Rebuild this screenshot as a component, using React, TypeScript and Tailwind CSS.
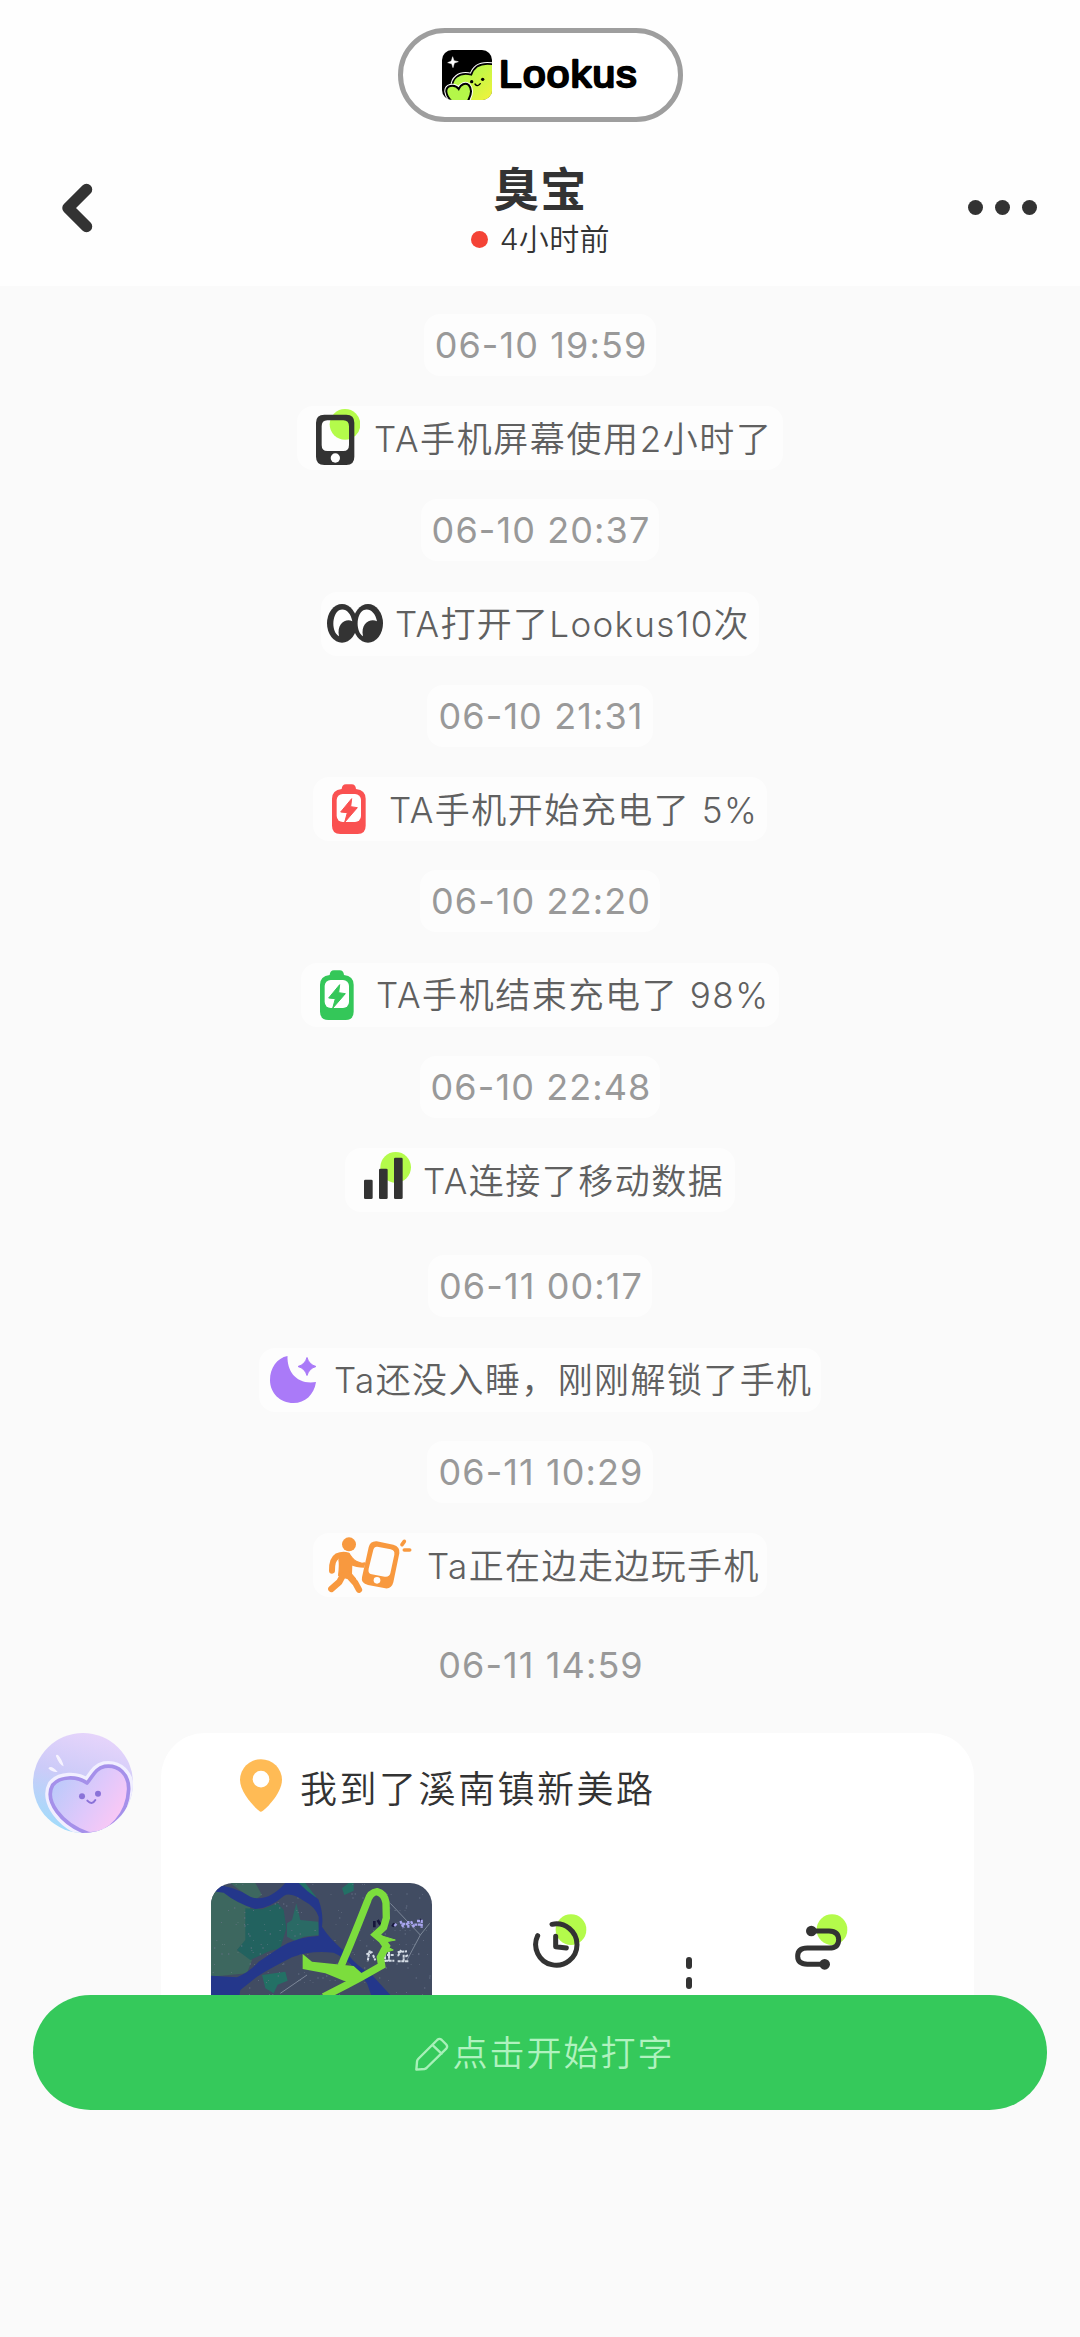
import type { ReactNode } from "react";

const LIME = "#b4fb4b";
const DARK = "#333333";

function LookusMark() {
  return (
    <svg className="h-[50px] w-[50px] shrink-0" viewBox="186 119 150 150">
      <defs>
        <linearGradient id="lime" x1="0" y1="0" x2="1" y2="1">
          <stop offset="0.1" stopColor="#a4fb4c" />
          <stop offset="0.9" stopColor="#f1f23c" />
        </linearGradient>
        <clipPath id="markClip">
          <rect x="186" y="119" width="150" height="150" rx="30" />
        </clipPath>
      </defs>
      <g clipPath="url(#markClip)">
        <rect x="186" y="119" width="150" height="150" fill="#000" />
        <path d="M217 235C214 205 236 184 274 193C282 168 305 155 345 163V280H225Z" fill="url(#lime)" stroke="#fff" strokeWidth="11" />
        <path d="M217 235C214 205 236 184 274 193C282 168 305 155 345 163V280H225Z" fill="url(#lime)" stroke="#000" strokeWidth="5" />
        <path d="M214 272C196 253 193 232 211 227C224 224 231 229 236 236C242 222 256 216 266 224C279 238 272 258 262 275" fill="#a9f84a" stroke="#fff" strokeWidth="12" />
        <path d="M214 272C196 253 193 232 211 227C224 224 231 229 236 236C242 222 256 216 266 224C279 238 272 258 262 275" fill="#b4f749" stroke="#000" strokeWidth="6" />
        <circle cx="275" cy="214" r="5" />
        <circle cx="308" cy="207" r="5" />
        <path d="M285 221Q292 231 301 220" fill="none" stroke="#000" strokeWidth="4" strokeLinecap="round" />
        <path d="M218 139L222 151L235 154L223 158L219 172L215 160L203 157L214 152Z" fill="#fff" stroke="#fff" strokeWidth="1.5" strokeLinejoin="round" />
      </g>
    </svg>
  );
}

function PhoneIcon() {
  return (
    <svg className="mb-[3px] h-[56px] w-[44px] shrink-0" viewBox="78 298 132 168">
      <circle cx="165" cy="344" r="46" fill={LIME} />
      <path fillRule="evenodd" fill={DARK} d="M103 315H169Q193 315 193 339V441Q193 466 169 466H103Q78 466 78 441V339Q78 315 103 315ZM112 332Q95 332 95 350V406Q95 424 112 424H160Q177 424 177 406V350Q177 332 160 332Z" />
      <circle cx="136" cy="445" r="14" fill="#fff" />
    </svg>
  );
}

function EyesIcon() {
  return (
    <svg className="h-[39px] w-[56px] shrink-0" viewBox="112 100 168 117">
      <ellipse cx="157" cy="158" rx="45" ry="58" fill={DARK} />
      <ellipse cx="235" cy="158" rx="45" ry="58" fill={DARK} />
      <path d="M148 197C125 184 126 133 148 119C166 111 183 125 188 152C170 142 140 158 148 197Z" fill="#fff" />
      <path d="M220 197C199 184 198 133 221 119C239 111 257 125 262 152C242 142 212 158 220 197Z" fill="#fff" />
    </svg>
  );
}

function BatteryIcon({ color }: { color: string }) {
  return (
    <svg className="h-[50px] w-[34px] shrink-0" viewBox="128 640 102 150">
      <path d="M157 655Q158 641 170 641H187Q199 641 200 655Q229 659 229 684V765Q229 790 205 790H153Q128 790 128 765V684Q128 659 157 655Z" fill={color} />
      <rect x="142" y="670" width="73" height="84" rx="18" fill="#fff" />
      <path d="M187 684L154 724L174 726L166 755L204 711L184 708Z" fill={color} stroke={color} strokeWidth="3" strokeLinejoin="round" />
    </svg>
  );
}

function SignalIcon() {
  return (
    <svg className="mb-[9px] h-[47px] w-[47px] shrink-0" viewBox="222 875 141 141">
      <circle cx="317" cy="921" r="46" fill={LIME} />
      <rect x="222" y="958" width="26" height="58" rx="4" fill={DARK} />
      <rect x="267" y="925" width="26" height="91" rx="4" fill={DARK} />
      <rect x="312" y="892" width="26" height="124" rx="4" fill={DARK} />
    </svg>
  );
}

function MoonIcon() {
  return (
    <svg className="h-[47px] w-[46px] shrink-0" viewBox="0 0 46 47">
      <path d="M17.5 0C17 16 27 29 46 26C44 39 35 47 23.500 47C10 47 0 37 0 24C0 12 7 2 17.500 0Z" fill="#aa7af8" />
      <path d="M37 1.500Q39 8.500 46 10.500Q39 12.500 37 19.500Q35 12.500 28 10.500Q35 8.500 37 1.500Z" fill="#aa7af8" stroke="#aa7af8" strokeLinejoin="round" />
    </svg>
  );
}

function WalkingIcon() {
  return (
    <svg className="h-[56px] w-[84px] shrink-0" viewBox="86 229 252 168" fill="none" stroke="#f8993f" strokeLinecap="round" strokeLinejoin="round">
      <circle cx="149" cy="251" r="21" fill="#f8993f" stroke="none" />
      <path d="M98 330Q97 297 113 287Q130 279 144 284" strokeWidth="18" />
      <path d="M125 282Q145 272 158 291Q168 304 188 308L196 307L193 319Q171 319 157 312L156 340L168 354L139 352L118 344Q122 314 119 298Z" fill="#f8993f" strokeWidth="4" />
      <path d="M130 345L120 364L96 385M145 342L168 367L179 387" strokeWidth="19" />
      <path fillRule="evenodd" fill="#f8993f" stroke="none" d="M232 242L282 252Q303 258 300 278L282 365Q277 385 258 383L206 373Q184 368 188 350L208 260Q212 241 232 242ZM234 258Q225 257 222 267L208 324Q205 338 217 341L256 348Q270 350 273 338L285 282Q287 269 274 266Z" />
      <circle cx="233" cy="359" r="10" fill="#fff" stroke="none" />
      <path d="M308 252L315 242M315 268H331" strokeWidth="11" />
    </svg>
  );
}

function Avatar() {
  return (
    <svg className="h-[100px] w-[100px] shrink-0" viewBox="99 99 300 300">
      <defs>
        <linearGradient id="avatarBg" x1="0.6" y1="0" x2="0.3" y2="1">
          <stop offset="0" stopColor="#e6d4fb" />
          <stop offset="0.45" stopColor="#cccbf8" />
          <stop offset="1" stopColor="#9fdcfb" />
        </linearGradient>
        <linearGradient id="heart" x1="0" y1="0.4" x2="0.9" y2="0.9">
          <stop offset="0" stopColor="#bdcafa" />
          <stop offset="0.5" stopColor="#dfc8fb" />
          <stop offset="1" stopColor="#ffc8f4" />
        </linearGradient>
        <clipPath id="avatarClip"><circle cx="249" cy="249" r="150" /></clipPath>
      </defs>
      <g clipPath="url(#avatarClip)">
        <rect x="99" y="99" width="300" height="300" fill="url(#avatarBg)" />
        <path d="M261 249C230 227 180 229 158 255C132 301 183 373 266 401C330 405 383 340 386 268C387 223 356 193 314 199C285 205 278 231 261 249Z" fill="none" stroke="#f1efff" strokeWidth="31" strokeLinejoin="round" />
        <path d="M261 249C230 227 180 229 158 255C132 301 183 373 266 401C330 405 383 340 386 268C387 223 356 193 314 199C285 205 278 231 261 249Z" fill="url(#heart)" stroke="#a590ea" strokeWidth="11" strokeLinejoin="round" />
        <circle cx="246" cy="289" r="9" fill="#8a72d8" />
        <circle cx="294" cy="281" r="9" fill="#8a72d8" />
        <path d="M262 302Q276 317 286 300" fill="none" stroke="#8a72d8" strokeWidth="6" strokeLinecap="round" />
        <path d="M168 169Q166 163 174 165Q187 179 191 199Q179 197 168 169ZM145 205Q153 193 173 216Q157 218 145 205Z" fill="#f6f3ff" />
      </g>
    </svg>
  );
}

function PinIcon() {
  return (
    <svg className="h-[53px] w-[42px] shrink-0" viewBox="719 177 126 158">
      <path d="M782 335C775 335 719 282 719 239A63 62 0 0 1 845 239C845 282 789 335 782 335Z" fill="#ffbb55" />
      <circle cx="782" cy="237" r="25" fill="#fff" />
    </svg>
  );
}

function MapPreview() {
  const specks = Array.from({ length: 260 }, (_, i) => {
    const x = 66 + ((i * 173 + i * i * 29) % 655);
    const y = 72 + ((i * 97 + i * i * 41) % 420);
    return { x, y, size: 2 + (i % 3) };
  });
  return (
    <div className="h-[221px] w-[221px] shrink-0 overflow-hidden rounded-[22px]">
      <svg className="h-full w-full" viewBox="62 69 663 663">
        <rect x="62" y="69" width="663" height="663" fill="#414c62" />
        <path d="M62 90L100 92L180 138L170 240L140 270L185 300L170 340L62 350Z" fill="#3d675f" />
        <path d="M120 69H195L215 105L190 122Z" fill="#3d675f" />
        <path d="M165 145L215 148L262 130L280 150L288 205L270 265L240 272L180 300L140 270L165 240Z" fill="#22625f" />
        <path d="M290 190L305 180L318 130L330 180L384 185L388 225L340 230L315 243L290 230Z" fill="#2a6a65" />
        <path d="M215 345L285 335L292 362L262 374L250 400L225 385ZM455 85L475 69H490V92L462 105Z" fill="#237065" />
        <path d="M310 69H345L378 112L360 118Z" fill="#237065" />
        {specks.map((s, i) => (
          <rect key={i} x={s.x} y={s.y} width={s.size} height={s.size} fill={i % 3 === 0 ? "#8a94a5" : "#697489"} opacity="0.7" />
        ))}
        <path d="M270 400L350 345M600 130L690 225L650 300M690 225L718 190" fill="none" stroke="#7c8798" strokeWidth="3" />
        <path d="M62 76Q120 72 180 110Q230 130 285 69H325Q350 95 384 118Q400 160 395 200Q420 240 470 280Q500 320 545 345L600 405V440H555L530 370Q480 300 430 278Q360 270 305 292Q240 325 200 350L150 390L145 420H62V347L140 352Q180 335 205 305L270 262Q320 230 385 228V170Q375 140 340 122Q300 95 280 108Q240 145 195 147Q140 130 100 98L62 93Z" fill="#24378b" />
        <path d="M552 183V202M562 180L570 194M606 200L612 190M688 178L694 186" stroke="#17173c" strokeWidth="8" />
        <path d="M612 198L620 190M630 183L640 204M636 192H654M654 183V204M662 184L672 204M680 183H694V204M672 194H694" fill="none" stroke="#a8a5ee" strokeWidth="7" strokeDasharray="9 2" />
        <path d="M528 283L548 275M538 271L532 304M548 285L555 301M584 278V306M590 285H610M596 276V304M584 302H612M622 276L650 274M632 270L622 290M640 284V306M622 304H656M645 290L654 285" fill="none" stroke="#d3dbe4" strokeWidth="6" strokeDasharray="9 2" />
        <g fill="none" stroke="#7cdd3d" strokeLinejoin="miter">
          <path d="M452 318L480 252L506 188L531 125Q539 97 560 95Q582 100 587 128L588 174L580 202L556 224L575 240L588 258L570 292L574 317L512 352L470 374L400 410" strokeWidth="22" />
          <path d="M575 228L615 240L585 246M590 260L609 270L582 278" fill="#7cdd3d" strokeWidth="3" />
        </g>
        <path d="M337 282L365 305L490 318L520 345L490 369L460 362L405 340L337 327Z" fill="#7cdd3d" />
      </svg>
    </div>
  );
}

function ClockIcon() {
  return (
    <svg className="h-[55px] w-[55px] shrink-0" viewBox="156 162 165 165" fill="none" stroke={DARK} strokeLinecap="round" strokeLinejoin="round">
      <circle cx="273" cy="209" r="46" fill={LIME} stroke="none" />
      <path d="M216 193A62 62 0 1 1 173 227" strokeWidth="15" />
      <path d="M227 229V260L259 264" strokeWidth="15" />
    </svg>
  );
}

function RouteIcon() {
  return (
    <svg className="h-[56px] w-[54px] shrink-0" viewBox="942 162 162 168" fill="none">
      <circle cx="1056" cy="209" r="46" fill={LIME} />
      <path d="M994 213H1047Q1076 214 1076 239Q1076 264 1047 264H982Q953 264 953 289Q953 312 982 313H1034" stroke={DARK} strokeWidth="15" />
      <circle cx="994" cy="213" r="16" fill={DARK} />
      <circle cx="1034" cy="313" r="16" fill={DARK} />
    </svg>
  );
}

function PencilIcon() {
  return (
    <svg className="h-[34px] w-[34px] shrink-0" viewBox="102 168 100 100" fill="none" stroke="#a8f0b8" strokeWidth="7" strokeLinejoin="round" strokeLinecap="round">
      <path d="M106 264L108 240Q108 236 112 232L168 176Q174 171 180 176L194 190Q199 196 194 202L138 257Q135 261 130 262ZM153 191L180 217" />
    </svg>
  );
}

function TimeStamp({ children, className, plain = false }: { children: ReactNode; className: string; plain?: boolean }) {
  return (
    <div className={`flex h-[62px] shrink-0 items-center rounded-[16px] pr-[9px] pl-[11px] text-[36px] leading-none tracking-[1.100px] text-[#999] ${plain ? "" : "bg-white/60"} ${className}`}>
      <span className="font-[370] whitespace-pre">{children}</span>
    </div>
  );
}

function Notice({ icon, children, className }: { icon: ReactNode; children: ReactNode; className: string }) {
  return (
    <div className={`flex h-[64px] shrink-0 items-center rounded-[16px] bg-white/60 text-[35px] leading-none text-[#606060] ${className}`}>
      {icon}
      <span className="pt-[2px] font-[350] whitespace-nowrap">{children}</span>
    </div>
  );
}

export default function App() {
  return (
    <div className="flex h-[2337px] w-[1080px] flex-col overflow-hidden bg-[#fafafa] font-['Inter','Noto_Sans_CJK_SC',sans-serif]">
      <header className="flex h-[286px] shrink-0 flex-col items-center bg-[#fefefe] pt-[28px]">
        <div className="flex h-[94px] w-[285px] items-center rounded-full border-[5px] border-[#9e9e9e] bg-white pl-[39px]">
          <LookusMark />
          <svg className="ml-[6px] h-[50px] w-[142px]" viewBox="0 0 142 50">
            <text x="1" y="37" textLength="139" lengthAdjust="spacingAndGlyphs" letterSpacing="1.2" fontFamily="Liberation Sans, sans-serif" fontSize="36.5" fill="#000" stroke="#000" strokeWidth="2.3" strokeLinejoin="round">Lookus</text>
          </svg>
        </div>
        <div className="flex w-full items-center justify-between pt-[34px] pr-[43px] pl-[61px]">
          <svg className="mt-[5px] h-[52px] w-[52px]" viewBox="0 0 52 52" fill="none">
            <path d="M25.500 7.500L7 26L25.500 44.500" stroke={DARK} strokeWidth="11.500" strokeLinecap="round" strokeLinejoin="round" />
          </svg>
          <div className="flex w-[140px] flex-col items-center text-[#333]">
            <h1 className="flex h-[66px] items-center text-[46px] leading-none font-bold tracking-[1px]">臭宝</h1>
            <div className="mt-[2px] flex h-[30px] items-center gap-[12px] text-[30px] leading-none">
              <span className="h-[17px] w-[17px] rounded-full bg-[#f44336]" />
              <span className="font-[350] tracking-[0.300px] whitespace-nowrap">4小时前</span>
            </div>
          </div>
          <div className="mt-[5px] flex gap-[11.500px]">
            <span className="h-[15.500px] w-[15.500px] rounded-full bg-[#333]" />
            <span className="h-[15.500px] w-[15.500px] rounded-full bg-[#333]" />
            <span className="h-[15.500px] w-[15.500px] rounded-full bg-[#333]" />
          </div>
        </div>
      </header>

      <main className="flex h-[1766px] shrink-0 flex-col items-center overflow-hidden pt-[27.500px]">
        <TimeStamp className="mb-[30.500px]">06-10 19:59</TimeStamp>
        <Notice className="mb-[29px] w-[486px] gap-[14px] pl-[19px] tracking-[1.600px]" icon={<PhoneIcon />}>TA手机屏幕使用2小时了</Notice>
        <TimeStamp className="mb-[30.500px]">06-10 20:37</TimeStamp>
        <Notice className="mb-[29px] w-[438px] gap-[12px] pl-[6px] tracking-[1.300px]" icon={<EyesIcon />}>TA打开了Lookus10次</Notice>
        <TimeStamp className="mb-[30.500px]">06-10 21:31</TimeStamp>
        <Notice className="mb-[29px] w-[454px] gap-[23px] pl-[19px] tracking-[1.500px]" icon={<BatteryIcon color="#fa5151" />}>TA手机开始充电了 5%</Notice>
        <TimeStamp className="mb-[30.500px]">06-10 22:20</TimeStamp>
        <Notice className="mb-[29px] w-[478px] gap-[22px] pl-[19px] tracking-[1.600px]" icon={<BatteryIcon color="#34c759" />}>TA手机结束充电了 98%</Notice>
        <TimeStamp className="mb-[30.500px]">06-10 22:48</TimeStamp>
        <Notice className="mb-[43px] w-[390px] gap-[12px] pl-[19px] tracking-[1.500px]" icon={<SignalIcon />}>TA连接了移动数据</Notice>
        <TimeStamp className="mb-[30.500px]">06-11 00:17</TimeStamp>
        <Notice className="mb-[29px] w-[562px] gap-[18px] pl-[11px] tracking-[1.400px]" icon={<MoonIcon />}>Ta还没入睡，刚刚解锁了手机</Notice>
        <TimeStamp className="mb-[30.500px]">06-11 10:29</TimeStamp>
        <Notice className="mb-[36.500px] w-[454px] gap-[15px] pl-[15px] tracking-[1.400px]" icon={<WalkingIcon />}>Ta正在边走边玩手机</Notice>
        <TimeStamp plain className="mb-[37px]">06-11 14:59</TimeStamp>

        <article className="flex w-full items-start gap-[28px] pl-[33px]">
          <Avatar />
          <div className="h-[420px] w-[813px] rounded-[44px] bg-white pt-[26px] pl-[50px]">
            <div className="ml-[29px] flex h-[54px] items-center gap-[18px] text-[37px] leading-none tracking-[2.500px] text-[#333]">
              <PinIcon />
              <span className="pt-[8px] font-[350]">我到了溪南镇新美路</span>
            </div>
            <div className="mt-[70px] flex items-start">
              <MapPreview />
              <div className="ml-[100px] pt-[31px]"><ClockIcon /></div>
              <div className="ml-[99px] flex flex-col gap-[8px] pt-[74px]">
                <span className="h-[12px] w-[6px] rounded-full bg-[#333]" />
                <span className="h-[12px] w-[6px] rounded-full bg-[#333]" />
                <span className="h-[12px] w-[6px] rounded-full bg-[#333]" />
              </div>
              <div className="ml-[102px] pt-[31px]"><RouteIcon /></div>
            </div>
          </div>
        </article>
      </main>

      <footer className="relative z-10 -mt-[57px] px-[33px]">
        <button className="flex h-[115px] w-full items-center justify-center gap-[3px] rounded-full bg-[#35c95b] pt-[2px] pl-[10px] text-[35px] leading-none tracking-[2px] text-[#b0f2bf]">
          <PencilIcon />
          <span className="font-[350]">点击开始打字</span>
        </button>
      </footer>
    </div>
  );
}
